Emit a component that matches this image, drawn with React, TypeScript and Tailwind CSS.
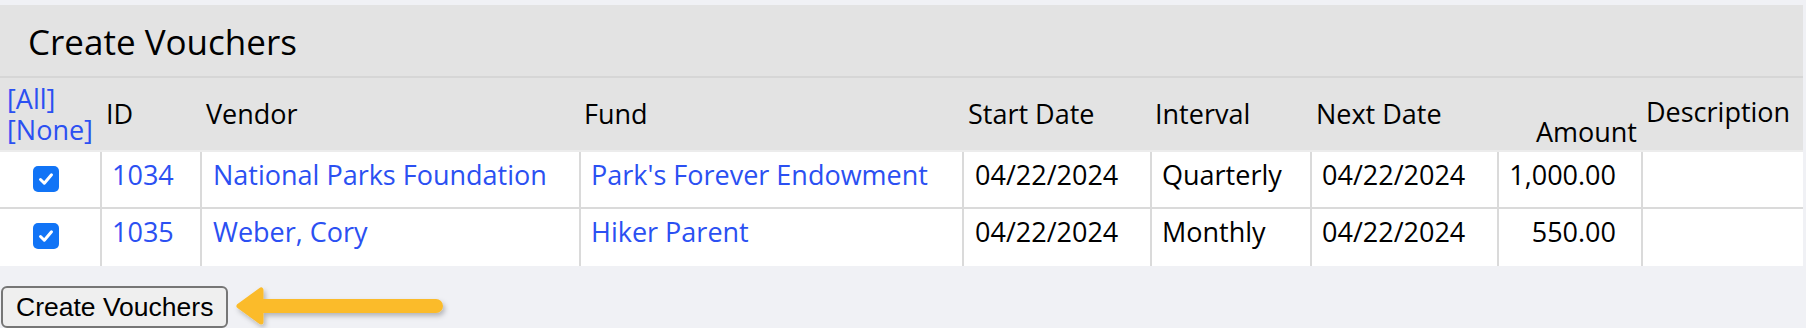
import React from "react";

const font = { fontFamily: '"Open Sans", "Noto Sans", sans-serif' };

type Row = {
  id: string;
  vendor: string;
  fund: string;
  start: string;
  interval: string;
  next: string;
  amount: string;
  h: string;
};

const rows: Row[] = [
  {
    id: "1034",
    vendor: "National Parks Foundation",
    fund: "Park's Forever Endowment",
    start: "04/22/2024",
    interval: "Quarterly",
    next: "04/22/2024",
    amount: "1,000.00",
    h: "h-[55px]",
  },
  {
    id: "1035",
    vendor: "Weber, Cory",
    fund: "Hiker Parent",
    start: "04/22/2024",
    interval: "Monthly",
    next: "04/22/2024",
    amount: "550.00",
    h: "h-[59px]",
  },
];

const gridCols =
  "grid grid-cols-[100px_100px_379px_383px_188px_160px_187px_144px_162px]";

function Check() {
  return (
    <span className="flex h-[26px] w-[26px] items-center justify-center rounded-[5px] bg-[#1174f6]">
      <svg width="18" height="18" viewBox="0 0 18 18" fill="none">
        <path
          d="M3.5 9.5 L7.3 13.2 L14.5 4.8"
          stroke="white"
          strokeWidth="3"
          strokeLinecap="round"
          strokeLinejoin="round"
        />
      </svg>
    </span>
  );
}

export default function App() {
  return (
    <div
      className="h-[328px] w-full overflow-hidden bg-[#f0f1f5] pt-[5px] text-[27px] leading-[30px] text-black"
      style={font}
    >
      <div className="w-[1803px]">
        <div className="flex h-[73px] items-center border-b-2 border-[#d6d6d6] bg-[#e3e3e3] pl-[28px] pt-[3px]">
          <h2 className="text-[35px] font-normal leading-[40px]">Create Vouchers</h2>
        </div>

        <div className={`${gridCols} h-[74px] border-b-2 border-[#ececec] bg-[#e3e3e3]`}>
          <div className="flex flex-col justify-center pl-[7px] text-[#2b50f2]">
            <a className="leading-[31px]">[All]</a>
            <a className="leading-[31px]">[None]</a>
          </div>
          <div className="flex items-center pl-[6px]">ID</div>
          <div className="flex items-center pl-[6px]">Vendor</div>
          <div className="flex items-center pl-[5px]">Fund</div>
          <div className="flex items-center pl-[6px]">Start Date</div>
          <div className="flex items-center pl-[5px]">Interval</div>
          <div className="flex items-center pl-[6px]">Next Date</div>
          <div className="flex items-end justify-end pb-[3px] pr-[4px]">Amount</div>
          <div className="flex items-center pl-[5px] pb-[4px]">Description</div>
        </div>

        {rows.map((r, i) => (
          <div
            key={r.id}
            className={`${gridCols} ${r.h} bg-white ${i > 0 ? "border-t-2 border-[#dadada]" : ""}`}
          >
            <div className="flex justify-start pl-[33px] pt-[14px]">
              <Check />
            </div>
            <div className="border-l-2 border-[#dadada] pl-[10px] pt-[8px] text-[#2b50f2]">{r.id}</div>
            <div className="border-l-2 border-[#dadada] pl-[11px] pt-[8px] text-[#2b50f2]">{r.vendor}</div>
            <div className="border-l-2 border-[#dadada] pl-[10px] pt-[8px] text-[#2b50f2]">{r.fund}</div>
            <div className="border-l-2 border-[#dadada] pl-[11px] pt-[8px]">{r.start}</div>
            <div className="border-l-2 border-[#dadada] pl-[10px] pt-[8px]">{r.interval}</div>
            <div className="border-l-2 border-[#dadada] pl-[10px] pt-[8px]">{r.next}</div>
            <div className="border-l-2 border-[#dadada] pr-[25px] pt-[8px] text-right">{r.amount}</div>
            <div className="border-l-2 border-[#dadada]"></div>
          </div>
        ))}
      </div>

      <div className="mt-[20px] flex items-start">
        <button
          className="ml-[1px] h-[42px] rounded-[6px] border-2 border-[#767676] bg-[#efefef] px-[13px] text-[26.5px] leading-[30px] text-black"
          style={{ fontFamily: '"Liberation Sans", Arial, sans-serif' }}
        >
          Create Vouchers
        </button>
        <svg width="230" height="44" viewBox="0 0 230 44" className="-mt-[2px] ml-[3px]">
          <defs>
            <filter id="sh" x="-10%" y="-40%" width="120%" height="180%">
              <feDropShadow dx="2" dy="3" stdDeviation="2.5" floodColor="#000" floodOpacity="0.25" />
            </filter>
          </defs>
          <g filter="url(#sh)">
            <line x1="28" y1="22" x2="205" y2="22" stroke="#fbbb2b" strokeWidth="14" strokeLinecap="round" />
            <polygon
              points="8,22 30,6 30,38"
              fill="#fbbb2b"
              stroke="#fbbb2b"
              strokeWidth="5"
              strokeLinejoin="round"
            />
          </g>
        </svg>
      </div>
    </div>
  );
}
